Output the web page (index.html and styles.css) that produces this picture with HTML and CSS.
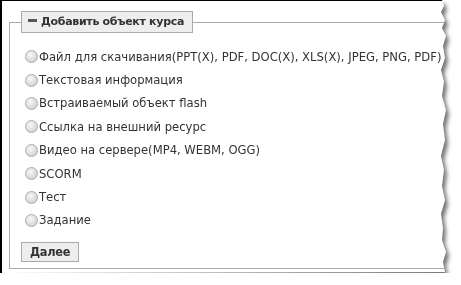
FILE: index.html
```html
<!DOCTYPE html>
<html lang="ru">
<head>
    <meta charset="UTF-8">
    <title>Добавить объект курса</title>
    <link rel="stylesheet" href="styles.css">
</head>
<body>
    <div class="shadow">
        <div class="paper">
            <fieldset class="box">
                <legend class="box-title"><span class="toggle"></span>Добавить объект курса</legend>
                <div class="options">
                    <label class="option"><input type="radio" name="kind" value="file">Файл для скачивания(PPT(X), PDF, DOC(X), XLS(X), JPEG, PNG, PDF)</label>
                    <label class="option"><input type="radio" name="kind" value="text">Текстовая информация</label>
                    <label class="option"><input type="radio" name="kind" value="flash">Встраиваемый объект flash</label>
                    <label class="option"><input type="radio" name="kind" value="link">Ссылка на внешний ресурс</label>
                    <label class="option"><input type="radio" name="kind" value="video">Видео на сервере(MP4, WEBM, OGG)</label>
                    <label class="option"><input type="radio" name="kind" value="scorm">SCORM</label>
                    <label class="option"><input type="radio" name="kind" value="test">Тест</label>
                    <label class="option"><input type="radio" name="kind" value="task">Задание</label>
                </div>
                <button class="next">Далее</button>
            </fieldset>
        </div>
    </div>
</body>
</html>
```

FILE: styles.css
```css
body {
    margin: 0;
    background: #fff;
    font-family: "DejaVu Sans", Verdana, sans-serif;
    font-size: 11.6px;
    color: #333;
}

.shadow {
    width: 448px;
    filter: drop-shadow(3px 4px 2px rgba(0, 0, 0, 0.55));
}

.paper {
    height: 272px;
    background: #fff;
    border-top: 1px solid #000;
    border-left: 2px solid #000;
    padding: 0 0 0 7px;
    /* torn right edge */
    clip-path: polygon(0 0, 442px 0, 444px 6px, 441px 12px, 445px 20px, 442px 28px, 446px 36px, 443px 46px, 445px 58px, 441px 70px, 444px 82px, 442px 96px, 446px 110px, 443px 124px, 445px 140px, 441px 156px, 444px 170px, 442px 186px, 445px 200px, 441px 214px, 443px 228px, 442px 240px, 446px 252px, 443px 262px, 445px 272px, 0 273px);
}

.box {
    margin: 0;
    width: 440px;
    height: 258px;
    box-sizing: border-box;
    border: 1px solid #aaa;
    padding: 0 0 0 11px;
    margin-top: 10px;
}

.box-title {
    font-weight: bold;
    font-size: 11px;
    letter-spacing: -0.3px;
    color: #333;
    background: #eee;
    border: 1px solid #aaa;
    padding: 3px 8px 4px 6px;
    margin-left: 0;
}

.toggle {
    display: inline-block;
    width: 9px;
    height: 3px;
    margin: 0 4px 3px 0;
    vertical-align: middle;
    background: #4a5866;
}

.options {
    display: flex;
    flex-direction: column;
    padding-top: 12px;
}

.option {
    display: flex;
    align-items: center;
    height: 23.4px;
    white-space: nowrap;
}

.option input {
    appearance: none;
    width: 13px;
    height: 13px;
    margin: 0 1px 0 4px;
    border: 1px solid #aaa;
    border-radius: 50%;
    background: radial-gradient(circle at 40% 35%, #f8f8f8, #d6d6d6 70%, #c4c4c4);
    box-sizing: border-box;
}

.next {
    margin-top: 10px;
    font-family: inherit;
    font-size: 11.4px;
    letter-spacing: -0.3px;
    font-weight: bold;
    color: #333;
    background: #eee;
    border: 1px solid #aaa;
    padding: 2px 5px;
    width: 58px;
    height: 20px;
}
```
